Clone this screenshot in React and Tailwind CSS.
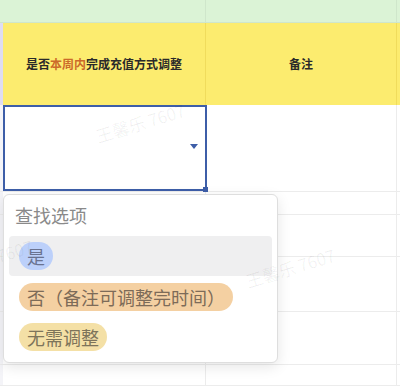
import React from "react";

const font = { fontFamily: '"Noto Sans CJK SC", "Noto Sans", sans-serif' };

function Watermark({ className }) {
  return (
    <div
      className={"absolute text-[17px] text-[#000]/[0.06] whitespace-nowrap -rotate-[17deg] pointer-events-none " + className}
    >
      王馨乐 7607
    </div>
  );
}

function GridRow({ h }) {
  return (
    <div className={"flex border-b border-[#ececec] " + h}>
      <div className="w-[3px] bg-[#f4f4f8]" />
      <div className="w-[203px] border-r border-[#ececec]" />
      <div className="w-[191px] border-r border-[#ececec]" />
      <div className="flex-1" />
    </div>
  );
}

export default function App() {
  return (
    <div className="relative w-[400px] h-[386px] overflow-hidden bg-white" style={font}>
      {/* green header row */}
      <div className="flex h-[23px] bg-[#dbf3d6] border-b border-[#cfe6cb]">
        <div className="w-[206px] border-r border-[#cfe6cb]" />
        <div className="w-[191px] border-r border-[#cfe6cb]" />
        <div className="flex-1" />
      </div>
      {/* yellow header row */}
      <div className="flex h-[82px] bg-[#fcec6f]">
        <div className="w-[3px] bg-[#dedcf2]" />
        <div className="w-[203px] border-r border-[#f0dc5c] flex items-center justify-center text-[12px] font-bold text-[#2a2a2a]">
          <span>
            是否<span className="text-[#cc6a2a]">本周内</span>完成充值方式调整
          </span>
        </div>
        <div className="w-[191px] border-r border-[#f0dc5c] flex items-center justify-center text-[12px] font-bold text-[#2a2a2a]">
          备注
        </div>
        <div className="flex-1" />
      </div>
      {/* selected row */}
      <div className="flex h-[87px] border-b border-[#ececec]">
        <div className="w-[3px] bg-[#f4f4f8]" />
        <div className="relative w-[204px] border-2 border-[#3d5ea8] flex items-center justify-end pr-[7px]">
          <svg width="8" height="6" viewBox="0 0 8 6" className="mt-[-2px]">
            <path d="M0 0 L8 0 L4 5 Z" fill="#3d5ea8" />
          </svg>
          <div className="absolute -right-[3px] -bottom-[3px] w-[5px] h-[5px] bg-[#3d5ea8]" />
        </div>
        <div className="w-[190px] border-r border-[#ececec]" />
        <div className="flex-1" />
      </div>
      <GridRow h="h-[23px]" />
      <GridRow h="h-[42px]" />
      <GridRow h="h-[55px]" />
      <GridRow h="h-[53px]" />
      <GridRow h="h-[21px]" />

      {/* dropdown */}
      <div className="absolute left-[3px] top-[194px] w-[275px] h-[169px] rounded-[6px] border border-[#dedede] bg-white shadow-[0_4px_14px_rgba(0,0,0,0.10)]">
        <div className="pl-[11px] pt-[8px] h-[41px] text-[18px] leading-[25px] text-[#8a8a8a]">查找选项</div>
        <div className="mx-[5px] h-[40px] rounded-[4px] bg-[#efeff0] flex items-center pl-[10px]">
          <span className="h-[28px] px-[8px] rounded-full bg-[#bcd0fa] text-[18px] leading-[28px] text-[#6a7390]">是</span>
        </div>
        <div className="flex flex-col items-start gap-[12px] pl-[15px] pt-[7px]">
          <span className="h-[28px] px-[8px] rounded-full bg-[#f4d0a2] text-[18px] leading-[28px] text-[#7d6b58]">
            否（备注可调整完时间）
          </span>
          <span className="h-[28px] px-[8px] rounded-full bg-[#f4e0a6] text-[18px] leading-[28px] text-[#7d745a]">
            无需调整
          </span>
        </div>
      </div>

      {/* watermarks */}
      <Watermark className="left-[94px] top-[110px]" />
      <Watermark className="left-[244px] top-[255px]" />
      <Watermark className="-left-[58px] top-[246px]" />
    </div>
  );
}
